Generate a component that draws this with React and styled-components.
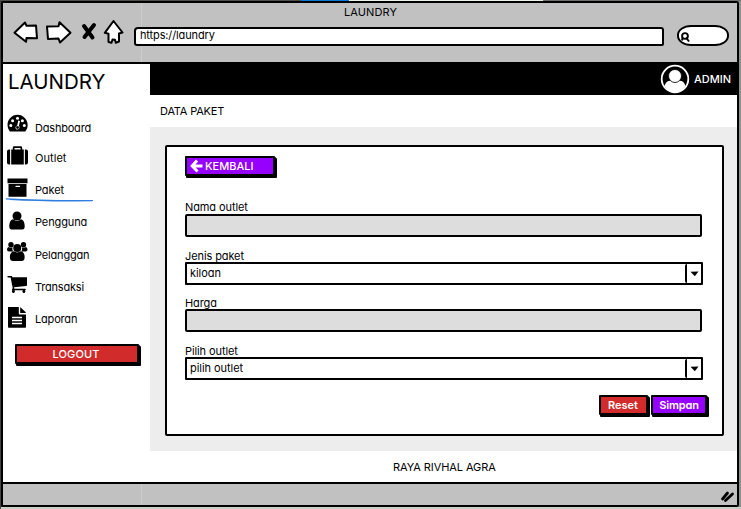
import React from "react";
import styled, { createGlobalStyle } from "styled-components";

const GlobalStyle = createGlobalStyle`
  * { box-sizing: border-box; }
  body {
    margin: 0;
    background: #6b6f6b;
    color: #000;
    font-family: Inter, "Liberation Sans", sans-serif;
    font-feature-settings: "cv11", "ss03";
    font-size: 11px;
    line-height: 14px;
  }
`;

const Desktop = styled.div`
  width: 741px;
  height: 509px;
  padding: 1px 2px 2px 1px;
  overflow: hidden;
  background:
    linear-gradient(90deg, #4c4c48 301px, #0a78d2 301px, #0a78d2 349px, #e9f3ea 349px, #e9f3ea 543px, #6d706b 543px) 0 0 / 741px 1px no-repeat,
    linear-gradient(#444, #444) 0 0 / 1px 509px no-repeat,
    linear-gradient(#c8d0c8, #c8d0c8) 0 507px / 741px 2px no-repeat,
    #8d918d;
`;

const Window = styled.div`
  display: grid;
  grid-template-rows: 61px minmax(0, 1fr) 23px;
  grid-template-columns: minmax(0, 1fr);
  width: 738px;
  height: 506px;
  border: 2px solid #000;
  border-radius: 1px 2px 2px 1px;
  background: #fff;
`;

const grey = "linear-gradient(90deg, #c1c1c1 138px, #cdcdcd 138px, #cdcdcd 139px, #c1c1c1 139px)";

const Chrome = styled.header`
  background: ${grey};
  border-bottom: 2px solid #000;
`;

const ChromeTitle = styled.div`
  height: 23px;
  padding: 2px 0 0 341px;
  letter-spacing: 0.1px;
`;

const Toolbar = styled.div`
  display: flex;
  align-items: flex-start;
  height: 34px;
  margin-top: -6px;
`;

const NavIcons = styled.svg`
  flex: none;
  width: 131px;
  height: 32px;
`;

const Address = styled.div`
  flex: none;
  width: 530px;
  height: 19px;
  margin-top: 7px;
  padding: 0 0 0 4px;
  border: 2px solid #000;
  border-radius: 4px 3px 2px 3px;
  background: #fff;
  line-height: 13px;
  letter-spacing: -0.13px;
`;

const Search = styled.div`
  width: 52px;
  height: 21px;
  margin: 5px 0 0 13px;
  border: 2px solid #000;
  border-radius: 14px / 10px;
  background: #fff;
  svg { display: block; margin: 5px 0 0 1px; }
`;

const Body = styled.div`
  display: grid;
  grid-template-columns: 147px minmax(0, 1fr);
`;

const Sidebar = styled.aside`
  display: flex;
  flex-direction: column;
`;

const Brand = styled.h1`
  height: 50px;
  margin: 0;
  padding: 5px 0 0 5px;
  font-size: 20.5px;
  line-height: 25px;
  font-weight: 400;
`;

const NavItem = styled.a`
  display: flex;
  height: ${(p) => p.$h}px;
  padding-left: 4px;
  svg { flex: none; width: 21px; height: 21px; margin-top: ${(p) => p.$iconTop}px; }
  span { margin: ${(p) => p.$drop}px 0 0 7px; letter-spacing: ${(p) => p.$ls}; height: 14px; }
`;

const Underline = styled.svg`
  display: block;
  width: 88px;
  height: 4px;
  margin: -11px 0 8px 3px;
`;

const SketchButton = styled.button`
  display: flex;
  flex: none;
  align-items: center;
  justify-content: ${(p) => p.$align || "center"};
  width: ${(p) => p.$w}px;
  height: ${(p) => p.$h}px;
  padding: 0 ${(p) => p.$pr || 0}px 0 ${(p) => p.$pl || 0}px;
  border: 2px solid #000;
  border-radius: 1px;
  background: ${(p) => p.$bg};
  box-shadow: 1px 1px 0 #000, 2px 2px 0 #000, 1px 2px 0 #000;
  color: #fff;
  font: ${(p) => p.$weight || 500} 11px/14px Inter, "Liberation Sans", sans-serif;
  font-feature-settings: inherit;
  letter-spacing: ${(p) => p.$ls || "0"};
  white-space: nowrap;
`;

const LogoutRow = styled.div`
  padding: 6px 0 0 12px;
`;

const Main = styled.main`
  display: grid;
  grid-template-rows: 31px 32px 324px minmax(0, 1fr);
  grid-template-columns: minmax(0, 1fr);
`;

const AdminBar = styled.div`
  display: flex;
  justify-content: flex-end;
  padding-right: 6px;
  background: #000;
  color: #fff;
  span { margin: 8px 0 0 4px; font-weight: 500; }
`;

const PageTitle = styled.div`
  padding: 9px 0 0 10px;
  letter-spacing: -0.18px;
`;

const Canvas = styled.section`
  padding: 18px 13px 15px 15px;
  background: #ededed;
`;

const Card = styled.div`
  height: 291px;
  padding: 9px 0 0 18px;
  border: 2px solid #000;
  border-radius: 2px;
  background: #fff;
`;

const Field = styled.div`
  height: ${(p) => p.$h}px;
  label { display: block; height: ${(p) => p.$lh || 13}px; letter-spacing: -0.1px; }
`;

const Input = styled.div`
  width: 517px;
  height: 23px;
  border: 2px solid #000;
  border-radius: 2px;
  background: #ddd;
`;

const Select = styled.div`
  display: flex;
  justify-content: space-between;
  width: 518px;
  height: 23px;
  border: 2px solid #000;
  border-radius: 1px;
  background: #fff;
  span { padding: 2px 0 0 3px; letter-spacing: -0.05px; }
  i {
    display: flex;
    justify-content: center;
    width: 16px;
    padding-top: 7px;
    border-left: 2px solid #000;
    border-radius: 2px 0 0 2px;
  }
`;

const Actions = styled.div`
  display: flex;
  gap: 3px;
  padding-left: 414px;
`;

const Credit = styled.footer`
  padding: 9px 0 0 243px;
  letter-spacing: -0.08px;
`;

const StatusBar = styled.div`
  display: flex;
  justify-content: flex-end;
  padding: 4px 2px 0 0;
  border-top: 2px solid #000;
  background: ${grey};
`;

const icons = {
  dashboard: (
    <>
      <path d="M3 17.5C-.3 13.500-.3 8 3 4.300 7-.3 14-.3 18 4.300 21.500 8 21.500 13.500 18.300 17.500Z" />
      <g fill="#fff">
        <circle cx="3.800" cy="11.500" r="1.500" /><circle cx="5.600" cy="6.700" r="1.500" />
        <circle cx="10.500" cy="4.300" r="1.500" /><circle cx="15.400" cy="6.700" r="1.500" />
        <circle cx="17.300" cy="11.500" r="1.500" />
        <path d="M11.300 6.600 13 7.100 11.900 11.800C13 13 12.600 15.400 10.500 15.500 8 15.400 7.800 12.300 10.200 11.400Z" />
      </g>
      <circle cx="10.500" cy="13.500" r="1.400" />
    </>
  ),
  suitcase: (
    <path d="M3.100 3.500v15H2Q0 18.500 0 16.500V5.500Q0 3.500 2 3.500ZM17.900 3.500h1.100q2 0 2 2v11q0 2-2 2h-1.100ZM4.200 3.500h1.600V1.700Q5.800.3 7.200.3h6.600q1.400 0 1.400 1.400V3.500h1.600v15H4.200ZM7.500 3.500h6V1.900h-6Z" fillRule="evenodd" />
  ),
  archive: <path d="M.5.500h20V5.300H.5ZM1.500 6h18V18.700h-18ZM9 7.800h3.500q.6 0 .6.600t-.6.600h-3.500q-.6 0-.6-.6t.6-.6Z" fillRule="evenodd" />,
  user: (
    <>
      <circle cx="10" cy="5" r="4.500" />
      <path d="M6.200 8.200Q10 11.800 13.800 8.200C17 8.500 17.800 13 17.700 15.500Q17.600 18.500 15.500 18.500h-11Q2.400 18.500 2.300 15.500C2.200 13 3 8.500 6.200 8.200Z" />
    </>
  ),
  users: (
    <>
      <circle cx="4" cy="2.700" r="2.700" /><circle cx="16.500" cy="2.700" r="2.700" />
      <path d="M1.500 5Q3.600 6.500 5.400 5.300 5 8 6.300 9.600H2Q0 9.600 0 7.800 0 5.500 1.500 5ZM19 5Q16.900 6.500 15.100 5.300 15.500 8 14.200 9.600h4.300Q20.500 9.600 20.500 7.800 20.500 5.500 19 5Z" />
      <circle cx="10.250" cy="6" r="4" />
      <path d="M6.900 9.300Q10.200 11.500 13.700 9.300C17 9.800 17.800 13 17.600 16Q17.400 19 14.500 19H6Q3.100 19 2.900 16C2.700 13 3.600 9.800 6.900 9.300Z" />
    </>
  ),
  cart: (
    <path d="M1 1h3.500q.7 0 .9 1.200H20V10q0 .9-.9 1L7 12.300l.4 1.400H18q.8 0 .8.800t-.8.800v0a1.500 1.500 0 1 1-2.200 0H7.500a1.500 1.500 0 1 1-2.200 0Q4.700 15 5 14.500l.7-1.500L3.600 2.600H1Q.4 2.600.4 1.800T1 1Z" />
  ),
  file: (
    <>
      <path d="M1 0h10.800V6.500q0 1 1 1H19v12.500q0 .7-.8.700H1.800Q1 20.700 1 20ZM13.200.2q.6.200 1 .7L18.200 4.700q.6.600.7 1.300h-5.700Z" />
      <path d="M5 10.500h10M5 13.500h10M5 16.500h10" stroke="#fff" strokeWidth="1.300" fill="none" />
    </>
  ),
};

const items = [
  ["Dashboard", "dashboard", 32, 7, "-0.2px", 0],
  ["Outlet", "suitcase", 32, 5, "0.05px", 0],
  ["Paket", "archive", 31, 5, "-0.1px", 0],
  ["Pengguna", "user", 31, 5, "-0.12px", 1],
  ["Pelanggan", "users", 34, 7, "-0.18px", 1],
  ["Transaksi", "cart", 31, 5, "-0.2px", 0],
  ["Laporan", "file", 32, 6, "-0.18px", 1],
];

const Caret = () => (
  <svg width="9" height="6" viewBox="0 0 9 6"><path d="M.5.8 8.500.5 4.800 5.200Z" /></svg>
);

export default function App() {
  return (
    <Desktop>
      <GlobalStyle />
      <Window>
        <Chrome>
          <ChromeTitle>LAUNDRY</ChromeTitle>
          <Toolbar>
            <NavIcons viewBox="3 20 131 32" fill="#fff" stroke="#000" strokeWidth="2" strokeLinejoin="round">
              <path d="M14.500 32.700 25 22.500 26.500 25.800 36 25.500 37 38.300 26.500 38 26 41.800Z" />
              <path d="M47 26.500 58.500 26.300 59.500 22.300 70.500 32.700 60 42.500 58.500 38.500 48 39Z" />
              <path d="M113.500 21 122.500 32.500 119 33.500 119 41.500 115.800 42.800 115 39.800 112.500 39.500 111.500 42.800 108.500 42 108.500 33.700 104.800 32.800Z" />
              <path d="M84 26 92.500 37.500M94 25 84.500 37" strokeWidth="4" strokeLinecap="round" />
            </NavIcons>
            <Address>https://laundry</Address>
            <Search>
              <svg width="11" height="11" viewBox="0 0 11 11" fill="none" stroke="#000" strokeWidth="1.900">
                <circle cx="5" cy="4" r="2.900" /><path d="M6 5.500 9 9.500M2.700 5.500 2 8.500" />
              </svg>
            </Search>
          </Toolbar>
        </Chrome>
        <Body>
          <Sidebar>
            <Brand>LAUNDRY</Brand>
            {items.map(([name, icon, h, drop, ls, iconTop]) => (
              <React.Fragment key={name}>
                <NavItem $h={h} $drop={drop} $ls={ls} $iconTop={iconTop}>
                  <svg viewBox="0 0 21 21">{icons[icon]}</svg>
                  <span>{name}</span>
                </NavItem>
                {name === "Paket" && (
                  <Underline viewBox="0 0 88 4">
                    <path d="M0 .8Q40 3 87 2.500M4 1.500Q40 3.500 86 2.800" fill="none" stroke="#2f7de0" strokeWidth="1.200" />
                  </Underline>
                )}
              </React.Fragment>
            ))}
            <LogoutRow>
              <SketchButton $w={124} $h={20} $bg="#d12b2b" $ls="0.1px" $pr={2}>LOGOUT</SketchButton>
            </LogoutRow>
          </Sidebar>
          <Main>
            <AdminBar>
              <svg width="30" height="30" viewBox="0 0 30 30">
                <circle cx="15" cy="15" r="13.300" fill="#000" stroke="#fff" strokeWidth="1.800" />
                <path d="M4.500 22Q6 16.500 11 16.800 15 20 19 16.800 24 16.500 25.500 22 21 28.500 15 28.500 9 28.500 4.500 22Z" fill="#fff" />
                <circle cx="15" cy="12" r="6.500" fill="#fff" stroke="#000" strokeWidth=".8" />
              </svg>
              <span>ADMIN</span>
            </AdminBar>
            <PageTitle>DATA PAKET</PageTitle>
            <Canvas>
              <Card>
                <Field $h={44}>
                  <SketchButton $w={90} $h={20} $bg="#9500ff" $align="flex-start" $pl={3}>
                    <svg width="15" height="14" viewBox="0 0 15 14"><path d="M7 1.500 2.200 7 7.500 12.500M2.500 7H12.500" fill="none" stroke="#fff" strokeWidth="3" /></svg>
                    KEMBALI
                  </SketchButton>
                </Field>
                <Field $h={49} $lh={14}><label>Nama outlet</label><Input /></Field>
                <Field $h={47}><label>Jenis paket</label><Select><span>kiloan</span><i><Caret /></i></Select></Field>
                <Field $h={48}><label>Harga</label><Input /></Field>
                <Field $h={51}><label>Pilih outlet</label><Select><span>pilih outlet</span><i><Caret /></i></Select></Field>
                <Actions>
                  <SketchButton $w={49} $h={20} $bg="#d12b2b" $weight={600} $pr={1}>Reset</SketchButton>
                  <SketchButton $w={56} $h={20} $bg="#9500ff" $weight={600} $ls="-0.15px">Simpan</SketchButton>
                </Actions>
              </Card>
            </Canvas>
            <Credit>RAYA RIVHAL AGRA</Credit>
          </Main>
        </Body>
        <StatusBar>
          <svg width="15" height="15" viewBox="0 0 15 15" stroke="#000" strokeWidth="2.800" strokeLinecap="round">
            <path d="M2.500 11 7.500 5M5.500 12.500 12.500 6" />
          </svg>
        </StatusBar>
      </Window>
    </Desktop>
  );
}
